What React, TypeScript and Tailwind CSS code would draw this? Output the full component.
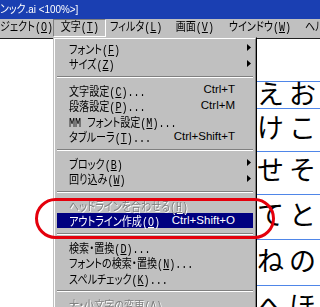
import React from "react";

const LBL =
  "inline-block origin-left scale-x-[0.84] whitespace-nowrap font-['Liberation_Mono','Noto_Sans_CJK_JP',monospace] text-[12px] leading-none [font-feature-settings:'palt']";
const LBLC =
  "inline-block origin-center scale-x-[0.84] whitespace-nowrap font-['Liberation_Mono','Noto_Sans_CJK_JP',monospace] text-[12px] leading-none [font-feature-settings:'palt']";

type Row =
  | { k: "sep" }
  | {
      k: "item";
      pre: string;
      key: string;
      post?: string;
      sc?: string;
      arrow?: boolean;
      dis?: boolean;
      act?: boolean;
    };

const items: Row[] = [
  { k: "item", pre: "フォント", key: "F", arrow: true },
  { k: "item", pre: "サイズ", key: "Z", arrow: true },
  { k: "sep" },
  { k: "item", pre: "文字設定", key: "C", post: "...", sc: "Ctrl+T" },
  { k: "item", pre: "段落設定", key: "P", post: "...", sc: "Ctrl+M" },
  { k: "item", pre: "MM フォント設定", key: "M", post: "..." },
  { k: "item", pre: "タブルーラ", key: "T", post: "...", sc: "Ctrl+Shift+T" },
  { k: "sep" },
  { k: "item", pre: "ブロック", key: "B", arrow: true },
  { k: "item", pre: "回り込み", key: "W", arrow: true },
  { k: "sep" },
  { k: "item", pre: "ヘッドラインを合わせる", key: "H", dis: true },
  { k: "item", pre: "アウトライン作成", key: "O", sc: "Ctrl+Shift+O", act: true },
  { k: "sep" },
  { k: "item", pre: "検索・置換", key: "D", post: "..." },
  { k: "item", pre: "フォントの検索・置換", key: "N", post: "..." },
  { k: "item", pre: "スペルチェック", key: "K", post: "..." },
  { k: "sep" },
  { k: "item", pre: "大・小文字の変更", key: "A", post: "...", dis: true },
];

function Arrow() {
  return (
    <svg width="4" height="7" viewBox="0 0 4 7">
      <polygon points="0,0 4,3.5 0,7" fill="#000" />
    </svg>
  );
}

function MenuRow({ r }: { r: Row }) {
  if (r.k === "sep") {
    return (
      <div className="flex h-[11px] flex-col justify-center">
        <div className="h-[1px] bg-[#808080]" />
        <div className="h-[1px] bg-white" />
      </div>
    );
  }
  const color = r.act
    ? "bg-[#000080] text-white"
    : r.dis
    ? "text-[#808080] [text-shadow:1px_1px_0_#fff]"
    : "text-black";
  return (
    <div className={`flex h-[15.5px] items-center ${color}`}>
      <div className="min-w-0 flex-1 pl-3">
        <span className={LBL}>
          {r.pre}(<span className="underline underline-offset-[1px]">{r.key}</span>)
          {r.post}
        </span>
      </div>
      {r.sc && (
        <span className="shrink-0 whitespace-nowrap font-['Liberation_Sans',sans-serif] text-[11.5px] leading-none">
          {r.sc}
        </span>
      )}
      <div className="flex w-[18px] shrink-0 justify-end pr-[2px]">
        {r.arrow && <Arrow />}
      </div>
    </div>
  );
}

const hira: { t: string; row: string; txt: string }[] = [
  { t: "えお", row: "h-[30px]", txt: "-mt-[3px]" },
  { t: "けこ", row: "h-[39px]", txt: "mt-[4px]" },
  { t: "せそ", row: "h-[40px]", txt: "mt-[3px]" },
  { t: "てと", row: "h-[40px]", txt: "mt-[5px]" },
  { t: "ねの", row: "h-[40px]", txt: "mt-[6px]" },
  { t: "へほ", row: "h-[40px]", txt: "mt-[5px]" },
];

export default function App() {
  return (
    <div className="relative h-[307px] w-[320px] overflow-hidden bg-white">
      {/* title bar */}
      <div className="flex h-[19px] items-center bg-[#1a3fb2] text-white">
        <span className="inline-block origin-left scale-x-[0.86] whitespace-nowrap font-['Liberation_Sans','Noto_Sans_CJK_JP',sans-serif] text-[11.5px] leading-none [font-feature-settings:'palt']">
          ンック.ai &lt;100%&gt;]
        </span>
      </div>
      {/* menu bar */}
      <div className="flex h-[19px] items-start bg-[#c0c0c0] text-black">
        <div className="flex h-[18px] w-[53px] shrink-0 items-center overflow-hidden">
          <span className={LBL}>
            ジェクト(<span className="underline underline-offset-[1px]">O</span>)
          </span>
        </div>
        <div className="flex h-[18px] w-[53px] shrink-0 items-center justify-center border border-b-white border-l-[#808080] border-r-white border-t-[#808080]">
          <span className={LBLC}>
            文字(<span className="underline underline-offset-[1px]">T</span>)
          </span>
        </div>
        <div className="flex h-[18px] w-[60px] shrink-0 items-center justify-center">
          <span className={LBLC}>
            フィルタ(<span className="underline underline-offset-[1px]">L</span>)
          </span>
        </div>
        <div className="flex h-[18px] w-[58px] shrink-0 items-center justify-center">
          <span className={LBLC}>
            画面(<span className="underline underline-offset-[1px]">V</span>)
          </span>
        </div>
        <div className="flex h-[18px] w-[72px] shrink-0 items-center justify-center">
          <span className={LBLC}>
            ウインドウ(<span className="underline underline-offset-[1px]">W</span>)
          </span>
        </div>
        <div className="flex h-[18px] shrink-0 items-center pl-[9px]">
          <span className={LBL}>ヘルプ</span>
        </div>
      </div>
      <div className="h-[1px] bg-[#202020]" />
      {/* document */}
      <div className="ml-[257px] mt-[42px] border-t border-[#4f86e8]">
        {hira.map((h) => (
          <div key={h.t} className={`${h.row} border-b border-[#4f86e8]`}>
            <div
              className={`${h.txt} whitespace-nowrap font-['Noto_Sans_CJK_JP',sans-serif] text-[27px] leading-none tracking-[5px] text-black`}
            >
              {h.t}
            </div>
          </div>
        ))}
      </div>

      {/* dropdown menu */}
      <div className="absolute left-[53px] top-[37px] w-[204px] border border-b-black border-l-[#c0c0c0] border-r-black border-t-[#c0c0c0] bg-[#c0c0c0]">
        <div className="border border-b-[#808080] border-l-white border-r-[#808080] border-t-white px-[2px] pb-6 pt-[1px]">
          {items.map((r, i) => (
            <MenuRow key={i} r={r} />
          ))}
        </div>
      </div>

      {/* red annotation */}
      <div className="absolute left-[35px] top-[198px] h-[41px] w-[240px] rounded-full border-[3px] border-[#e4000c]" />
    </div>
  );
}
